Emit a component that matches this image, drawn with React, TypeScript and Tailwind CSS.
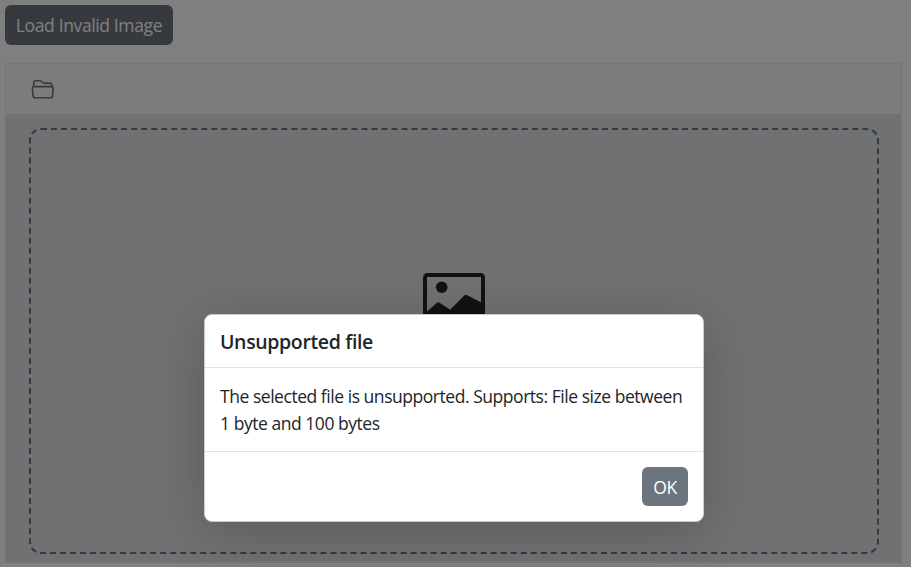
function FolderIcon() {
  return (
    <svg width="24" height="22" viewBox="0 0 24 22" fill="none" stroke="#6c757d" strokeWidth="1.6" strokeLinejoin="round">
      <path d="M2.7 8V3.7Q2.7 1.7 4.7 1.7H8.6Q9.7 1.7 10.7 2.8Q12 4.1 13.4 4.1H18.6Q20.6 4.1 20.8 6.2L21 8" />
      <path d="M2.7 7.6H20.8Q22.2 7.6 22.1 9.1L21.5 16.9Q21.3 18.8 19.3 18.8H4.2Q2.3 18.8 2.1 16.9L1.4 9.1Q1.3 7.6 2.7 7.6Z" />
    </svg>
  );
}

function ImageIcon() {
  return (
    <svg width="62" height="54" viewBox="0 0 62 54" fill="#212529">
      <path fillRule="evenodd" d="M5 0H57Q62 0 62 5V49Q62 54 57 54H5Q0 54 0 49V5Q0 0 5 0ZM4 4V38.5L14 29.8Q15.3 28.7 16.6 29.8L27.2 36.7L41 22.8Q42.5 21.3 44.2 22.2L58 29.3V4Z" />
      <circle cx="18.7" cy="14.2" r="5.8" />
    </svg>
  );
}

export default function App() {
  return (
    <div className="relative h-[567px] w-full overflow-hidden bg-white px-[5px] pt-[5px] font-['Open_Sans','Noto_Sans',sans-serif] text-[17.5px] text-[#212529]">
      <button className="flex h-10 w-[168px] items-center justify-center whitespace-nowrap rounded-[6px] bg-[#6c757d] tracking-[-0.37px] text-white">
        Load Invalid Image
      </button>
      <section className="mt-[18px] h-[500px] w-[897px] border border-[#e9ecef] bg-[#dee2e6]">
        <header className="flex h-[50px] items-center bg-[#f8f9fa] pl-[25px] pt-0.5">
          <FolderIcon />
        </header>
        <div className="ml-[23px] mt-[14px] flex h-[426px] w-[850px] justify-center rounded-[12px] border-2 border-dashed border-[#6c757d] pt-[143px]">
          <ImageIcon />
        </div>
      </section>
      <div className="absolute inset-0 bg-black/50">
        <div
          role="dialog"
          className="absolute left-[204px] top-[314px] flex h-[208px] w-[500px] flex-col rounded-[8px] border border-[#c9cbcc] bg-white shadow-[0_9px_54px_rgba(0,0,0,0.2)]"
        >
          <h2 className="flex h-[53px] items-center border-b border-[#dee2e6] pl-[15px] pt-0.5 text-[19.5px] font-semibold tracking-[-0.36px]">
            Unsupported file
          </h2>
          <p className="h-[84px] whitespace-nowrap border-b border-[#dee2e6] pl-[15px] pt-[15px] leading-[27px] tracking-[-0.46px]">
            The selected file is unsupported. Supports: File size between
            <br />1 byte and 100 bytes
          </p>
          <footer className="flex justify-end pr-[15px] pt-[15px]">
            <button className="flex h-[39px] w-[46px] items-center justify-center rounded-[6px] bg-[#6c757d] pt-0.5 tracking-[-0.3px] text-white">OK</button>
          </footer>
        </div>
      </div>
    </div>
  );
}
